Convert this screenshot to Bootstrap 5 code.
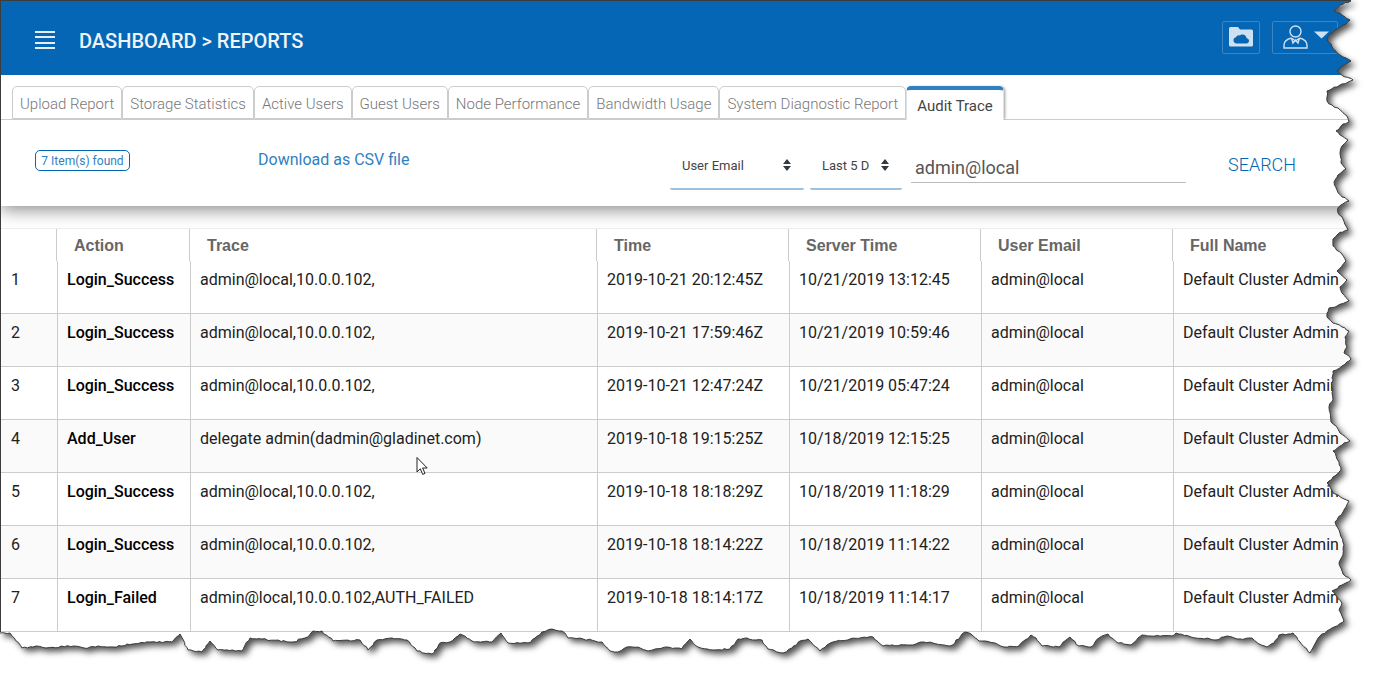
<!DOCTYPE html>
<html lang="en">
<head>
<meta charset="utf-8">
<meta name="viewport" content="width=device-width, initial-scale=1">
<title>Dashboard - Reports</title>
<link href="https://cdn.jsdelivr.net/npm/bootstrap@5.3.0/dist/css/bootstrap.min.css" rel="stylesheet">
<style>
  body { font-family: Roboto, "Liberation Sans", sans-serif; font-size: 16px; line-height: 24px; color: #212121; background: #fff; }
  .page-frame { min-height: 100vh; overflow: hidden; }
  .report-page { border-top: 1px solid #3c3c3c; border-left: 1px solid #3c3c3c; }
  .top-bar { background: #0466b4; height: 74px; padding: 6px 36px 0 34px; }
  .crumbs { font-size: 20px; font-weight: 500; color: #eef4fa; }
  .icon-btn { border: 1px solid #3a86c4; border-radius: 2px; height: 33px; background: transparent; }
  .folder-btn { width: 38px; }
  .user-btn { width: 66px; padding-left: 10px; }
  .filter-panel { box-shadow: 0 4px 16px rgba(0,0,0,.45); clip-path: inset(0 0 -30px 0); height: 131px; background: #fff; }
  .report-tabs { padding: 11px 0 0 11px; border-bottom: 1px solid #ccc; height: 45px; flex-wrap: nowrap; }
  .report-tabs .nav-link { font-weight: 300; color: #777; white-space: nowrap; padding: 5px 7px 0; height: 33px; margin: 0; border: 1px solid #ccc; border-radius: 5px 5px 0 0; font-size: 15px; }
  .report-tabs .nav-link.active { font-weight: 400; color: #444; border-top: 4px solid #3080c3; border-bottom: 0; padding: 4px 10px 0; height: 34px; box-shadow: 2px 0 3px -1px #999; clip-path: inset(-3px -4px 0 -1px); }
  .filters { padding: 30px 78px 0 34px; }
  .found { border: 1px solid #0466b4; border-radius: 5px; color: #3080c3; font-size: 12px; line-height: 20px; height: 21px; width: 95px; text-align: center; }
  .csv-link { color: #3080c3; text-decoration: none; margin-left: 128px; margin-top: -2px; }
  .query { margin-top: -8px; }
  .filters .form-select { font-size: 13px; color: #444; border: 0; border-bottom: 2px solid #9bc3e0; border-radius: 2px; height: 48px; padding: 2px 12px 0;
    background: #fff url("data:image/svg+xml,%3Csvg xmlns='http://www.w3.org/2000/svg' viewBox='0 0 10 12'%3E%3Cpath fill='%23343a40' d='M1 5L5 0l4 5zM1 7h8l-4 5z'/%3E%3C/svg%3E") no-repeat right 12px center / 10px 12px; }
  .filters .field-pick { width: 134px; margin-right: 6px; }
  .filters .days-pick { width: 92px; margin-right: 9px; }
  .filters .form-control { width: 275px; font-size: 18px; color: #555; border: 0; border-bottom: 1px solid #bbb; border-radius: 0; padding: 2px 4px 0; height: 32px; margin-top: 9px; }
  .search-btn { font-size: 18px; font-weight: 300; color: #0466b4; border: 0; background: transparent; padding: 3px 0 0; margin-left: 42px; }
  .audit { table-layout: fixed; width: 100%; margin: 22px 0 0; border-collapse: separate; border-spacing: 0; }
  .audit th, .audit td { padding: 0 9px; vertical-align: top; text-align: left; white-space: nowrap; overflow: hidden; }
  .audit thead th { height: 33px; border-top: 1px solid #eee; color: #666; font-weight: 700; padding: 5px 16px 0; background: linear-gradient(#ccc,#ccc) no-repeat right 1px top / 1px 32px; font-family: "Liberation Sans", sans-serif; }
  .audit thead th:last-child { background: none; }
  .audit tbody td, .audit tbody th { height: 53px; padding-top: 7px; border-bottom: 1px solid #ccc; border-right: 1px solid #ccc; }
  .audit tbody td:first-child { padding-left: 10px; }
  .audit tbody th { font-weight: 500; color: #000; }
  .audit tbody td:last-child { border-right: 0; }
  .audit tbody tr:nth-child(even) { background: #fafafa; }
  .c-num { width: 57px; } .c-action { width: 133px; } .c-trace { width: 407px; } .c-mid { width: 192px; }
  .over { pointer-events: none; }
  .pointer { left: 416px; top: 456px; }
</style>
</head>
<body>
<div class="page-frame position-relative">
  <div class="report-page">
    <header class="top-bar d-flex align-items-center">
      <button class="btn p-0 border-0 d-flex" type="button" aria-label="Menu">
        <svg width="20" height="20" viewBox="0 0 20 20" stroke="#e4eef7" stroke-width="2"><path d="M0 1h20M0 6h20M0 12h20M0 17h20"/></svg>
      </button>
      <div class="crumbs ms-4">DASHBOARD &gt; REPORTS</div>
      <div class="ms-auto d-flex gap-2 pb-2">
        <button class="icon-btn folder-btn p-0 d-flex align-items-center justify-content-center" type="button" aria-label="Cloud folder">
          <svg width="24" height="20" viewBox="0 0 24 20"><path fill="#cfe0f0" d="M0 1.500Q0 0 1.500 0h7.500l2 2.500h11.500q1.500 0 1.500 1.500v14q0 1.500-1.500 1.500h-21Q0 19.500 0 18z"/><path fill="#0466b4" d="M7.500 16.500a3.200 3.200 0 0 1-.6-6.300 3.500 3.500 0 0 1 4-1.800 4.200 4.200 0 0 1 6.700 2.800h.3a2.700 2.700 0 0 1 0 5.300z"/></svg>
        </button>
        <button class="icon-btn user-btn d-flex align-items-center ms-1" type="button" aria-label="Account">
          <svg width="48" height="24" viewBox="0 0 48 24" fill="none" stroke="#cfe0f0" stroke-width="1.400"><circle cx="12.500" cy="6.500" r="5.500"/><path d="M8.500 13Q1 15 1 20v3h23v-3q0-5-7.500-7M8.500 13l1.500 5 2.500-3 2.500 3 1.500-5M9 13.500l3.500 2.500 3.500-2.500"/><path fill="#cfe0f0" stroke="none" d="M31 6.500h15l-7.500 7z"/></svg>
        </button>
      </div>
    </header>

    <section class="filter-panel position-relative">
      <nav class="nav nav-tabs report-tabs">
        <a class="nav-link" href="#">Upload Report</a>
        <a class="nav-link" href="#">Storage Statistics</a>
        <a class="nav-link" href="#">Active Users</a>
        <a class="nav-link" href="#">Guest Users</a>
        <a class="nav-link" href="#">Node Performance</a>
        <a class="nav-link" href="#">Bandwidth Usage</a>
        <a class="nav-link" href="#">System Diagnostic Report</a>
        <a class="nav-link active" href="#" aria-current="page">Audit Trace</a>
      </nav>
      <form class="filters d-flex align-items-start">
        <span class="found">7 Item(s) found</span>
        <a class="csv-link" href="#">Download as CSV file</a>
        <div class="query ms-auto d-flex align-items-start">
          <select class="form-select field-pick" aria-label="Search field"><option>User Email</option></select>
          <select class="form-select days-pick" aria-label="Period"><option>Last 5 D</option></select>
          <input class="form-control" type="text" value="admin@local" aria-label="Search text">
        </div>
        <button class="search-btn" type="button">SEARCH</button>
      </form>
    </section>

    <table class="audit">
      <colgroup><col class="c-num"><col class="c-action"><col class="c-trace"><col class="c-mid"><col class="c-mid"><col class="c-mid"><col></colgroup>
      <thead><tr><th></th><th scope="col">Action</th><th scope="col">Trace</th><th scope="col">Time</th><th scope="col">Server Time</th><th scope="col">User Email</th><th scope="col">Full Name</th></tr></thead>
      <tbody>
        <tr><td>1</td><th scope="row">Login_Success</th><td>admin@local,10.0.0.102,</td><td>2019-10-21 20:12:45Z</td><td>10/21/2019 13:12:45</td><td>admin@local</td><td>Default Cluster Admin</td></tr>
        <tr><td>2</td><th scope="row">Login_Success</th><td>admin@local,10.0.0.102,</td><td>2019-10-21 17:59:46Z</td><td>10/21/2019 10:59:46</td><td>admin@local</td><td>Default Cluster Admin</td></tr>
        <tr><td>3</td><th scope="row">Login_Success</th><td>admin@local,10.0.0.102,</td><td>2019-10-21 12:47:24Z</td><td>10/21/2019 05:47:24</td><td>admin@local</td><td>Default Cluster Admin</td></tr>
        <tr><td>4</td><th scope="row">Add_User</th><td>delegate admin(dadmin@gladinet.com)</td><td>2019-10-18 19:15:25Z</td><td>10/18/2019 12:15:25</td><td>admin@local</td><td>Default Cluster Admin</td></tr>
        <tr><td>5</td><th scope="row">Login_Success</th><td>admin@local,10.0.0.102,</td><td>2019-10-18 18:18:29Z</td><td>10/18/2019 11:18:29</td><td>admin@local</td><td>Default Cluster Admin</td></tr>
        <tr><td>6</td><th scope="row">Login_Success</th><td>admin@local,10.0.0.102,</td><td>2019-10-18 18:14:22Z</td><td>10/18/2019 11:14:22</td><td>admin@local</td><td>Default Cluster Admin</td></tr>
        <tr><td>7</td><th scope="row">Login_Failed</th><td>admin@local,10.0.0.102,AUTH_FAILED</td><td>2019-10-18 18:14:17Z</td><td>10/18/2019 11:14:17</td><td>admin@local</td><td>Default Cluster Admin</td></tr>
      </tbody>
    </table>
  </div>

  <!-- torn paper edge along the right and bottom, with its shadow -->
  <svg class="over position-absolute top-0 start-0 w-100 h-100" viewBox="0 0 1374 676" preserveAspectRatio="none" aria-hidden="true">
    <defs>
      <path id="tear" d="M1351 1L1340 5 1334 11 1342 15 1350 20 1343 25 1337 29 1330 34 1327 40 1332 47 1337 53 1343 57 1351 61 1342 66 1337 71 1343 76 1353 80 1342 84 1337 87 1327 91 1327 101 1332 105 1338 108 1347 116 1349 122 1343 124 1336 131 1342 136 1348 140 1342 146 1340 153 1341 163 1346 169 1338 175 1334 182 1337 190 1342 197 1349 201 1338 208 1338 213 1343 219 1348 230 1338 234 1333 239 1333 246 1341 253 1346 261 1337 271 1347 280 1340 287 1342 293 1349 301 1337 306 1329 308 1327 317 1333 323 1342 327 1349 331 1345 337 1347 347 1344 353 1351 359 1342 366 1333 371 1332 387 1333 400 1329 407 1331 422 1338 429 1340 433 1350 441 1340 446 1333 451 1339 462 1341 470 1333 477 1327 483 1333 493 1349 501 1343 512 1335 522 1340 533 1344 545 1343 555 1339 563 1343 574 1351 580 1342 585 1332 591 1342 603 1339 610 1344 621 1332 628 1320 636 1316 642 1310 653 1300 642 1293 633 1288 634 1279 635 1274 643 1267 647 1259 644 1252 638 1237 639 1227 636 1216 640 1191 637 1176 633 1172 636 1142 635 1138 638 1131 645 1118 643 1108 634 1099 638 1091 647 1079 646 1070 637 1059 647 1042 646 1036 638 1031 635 1025 640 1019 646 1004 647 995 643 985 641 979 641 971 634 965 632 959 639 950 646 924 642 910 645 883 646 873 637 850 639 833 642 827 645 820 651 808 639 800 641 792 648 783 653 768 649 762 640 756 640 747 638 738 639 730 649 713 650 698 647 690 639 682 649 667 647 648 651 638 647 627 647 618 652 610 651 602 642 583 639 568 638 562 631 552 629 542 632 535 638 528 643 508 643 501 633 492 642 472 641 460 634 450 642 440 643 432 654 417 651 407 640 392 638 377 640 368 650 360 640 333 641 322 631 313 631 305 638 293 642 250 638 242 651 218 650 210 641 202 652 188 650 180 634 172 642 150 642 133 644 113 647 98 646 84 648 74 646 46 648 36 646 22 648 10 633 0 633"/>
      <clipPath id="outside"><path id="outer" clip-rule="evenodd" d=""/></clipPath>
      <filter id="soft" x="-5%" y="-5%" width="110%" height="110%"><feGaussianBlur stdDeviation="3"/></filter>
    </defs>
    <g clip-path="url(#outside)">
      <path fill="#fff" d="M0 0h1374v676H0z"/>
      <path id="shade" fill="#000" fill-opacity=".68" filter="url(#soft)" transform="translate(4 4)" d=""/>
    </g>
    <use href="#tear" fill="none" stroke="#3a3a3a" stroke-width="1"/>
  </svg>

  <svg class="over pointer position-absolute" width="13" height="20" viewBox="0 0 13 20" aria-hidden="true"><path fill="#fff" stroke="#222" d="M1 1.500v14.500l3.300-3.200 2.400 5.600 2.300-1-2.400-5.400h4.600z"/></svg>
</div>
<script>
  // close the torn line into the sheet outline, roughening it slightly
  const tear = document.getElementById('tear');
  const pts = tear.getAttribute('d').match(/\d+/g).map(Number);
  let seed = 7, line = 'M' + pts[0] + ' ' + pts[1];
  const rnd = () => (seed = (seed * 16807) % 2147483647) / 2147483647 - 0.5;
  for (let i = 2; i < pts.length; i += 2) {
    const dx = pts[i] - pts[i - 2], dy = pts[i + 1] - pts[i - 1];
    const n = Math.max(1, Math.round(Math.hypot(dx, dy) / 3));
    for (let k = 1; k <= n; k++) {
      const j = k < n ? 1.6 : 0;
      line += 'L' + (pts[i - 2] + dx * k / n + rnd() * j).toFixed(1) + ' ' + (pts[i - 1] + dy * k / n + rnd() * j).toFixed(1);
    }
  }
  tear.setAttribute('d', line);
  document.getElementById('outer').setAttribute('d', 'M0 0H1374V676H0Z' + line + 'V0H1351Z');
  document.getElementById('shade').setAttribute('d', line + 'V0H1351Z');
</script>
<script src="https://cdn.jsdelivr.net/npm/bootstrap@5.3.0/dist/js/bootstrap.bundle.min.js"></script>
</body>
</html>
